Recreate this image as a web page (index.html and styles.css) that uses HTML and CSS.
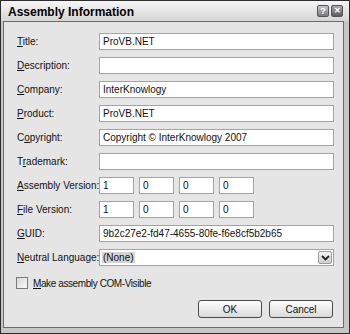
FILE: index.html
```html
<!DOCTYPE html>
<html lang="en">
<head>
    <meta charset="UTF-8">
    <title>Assembly Information</title>
    <link rel="stylesheet" href="styles.css">
</head>
<body>
    <div class="window">
        <div class="titlebar">
            <span class="caption">Assembly Information</span>
            <div class="caption-buttons">
                <span class="cap-btn">?</span>
                <span class="cap-btn close">&#x2715;</span>
            </div>
        </div>
        <div class="client">
            <div class="form">
                <label class="lbl"><u>T</u>itle:</label>
                <input class="field" value="ProVB.NET">

                <label class="lbl"><u>D</u>escription:</label>
                <input class="field" value="">

                <label class="lbl"><u>C</u>ompany:</label>
                <input class="field" value="InterKnowlogy">

                <label class="lbl"><u>P</u>roduct:</label>
                <input class="field" value="ProVB.NET">

                <label class="lbl">C<u>o</u>pyright:</label>
                <input class="field" value="Copyright © InterKnowlogy 2007">

                <label class="lbl">T<u>r</u>ademark:</label>
                <input class="field" value="">

                <label class="lbl"><u>A</u>ssembly Version:</label>
                <div class="versions">
                    <input class="field small" value="1">
                    <input class="field small" value="0">
                    <input class="field small" value="0">
                    <input class="field small" value="0">
                </div>

                <label class="lbl"><u>F</u>ile Version:</label>
                <div class="versions">
                    <input class="field small" value="1">
                    <input class="field small" value="0">
                    <input class="field small" value="0">
                    <input class="field small" value="0">
                </div>

                <label class="lbl"><u>G</u>UID:</label>
                <input class="field" value="9b2c27e2-fd47-4655-80fe-f6e8cf5b2b65">

                <label class="lbl"><u>N</u>eutral Language:</label>
                <div class="combo">
                    <span class="combo-text"><span class="selected">(None)</span></span>
                    <span class="combo-btn">
                        <svg width="9" height="6" viewBox="0 0 9 6"><path d="M1 1 L4.5 4.5 L8 1" fill="none" stroke="#222" stroke-width="1.8"/></svg>
                    </span>
                </div>
            </div>

            <label class="check"><span class="box"></span><span class="check-text"><u>M</u>ake assembly COM-Visible</span></label>

            <div class="buttons">
                <button class="btn">OK</button>
                <button class="btn">Cancel</button>
            </div>
        </div>
    </div>
</body>
</html>
```

FILE: styles.css
```css
html, body {
    margin: 0;
    padding: 0;
}
body {
    width: 350px;
    height: 334px;
    font-family: "Liberation Sans", Arial, sans-serif;
    font-size: 10px;
    color: #111;
    background: #fff;
}
.window {
    box-sizing: border-box;
    width: 350px;
    height: 334px;
    border: 1px solid #2c2c2c;
    background: #c6c6c6;
    display: flex;
    flex-direction: column;
}
.titlebar {
    height: 20px;
    flex: none;
    display: flex;
    align-items: center;
    justify-content: space-between;
    padding: 0 6px 0 7px;
    background: linear-gradient(#f6f6f6, #e2e2e2 60%, #d6d6d6);
}
.caption {
    font-weight: bold;
    font-size: 12px;
    color: #000;
    padding-top: 1px;
}
.caption-buttons {
    display: flex;
    gap: 2px;
}
.cap-btn {
    box-sizing: border-box;
    width: 12px;
    height: 12px;
    border: 1px solid #555;
    border-radius: 2px;
    background: linear-gradient(#c8c8c8, #7a7a7a);
    color: #fff;
    font-size: 9px;
    font-weight: bold;
    line-height: 10px;
    text-align: center;
}
.cap-btn.close {
    background: linear-gradient(#a8a8a8, #5c5c5c);
    font-size: 8px;
}
.client {
    flex: 1;
    margin: 0 5px 5px 2px;
    border: 1px solid #6c6c6c;
    background: #e5e5e5;
    padding: 11px 8px 0 13px;
    display: flex;
    flex-direction: column;
}
.form {
    display: grid;
    grid-template-columns: 82px 235px;
    grid-auto-rows: 17px;
    row-gap: 7px;
    align-items: center;
}
.lbl {
    white-space: nowrap;
}
.field {
    box-sizing: border-box;
    height: 17px;
    width: 235px;
    margin: 0;
    padding: 0 3px;
    border: 1px solid #a4a4a4;
    background: #fff;
    font-family: inherit;
    font-size: 10px;
    color: #111;
    outline: none;
}
.versions {
    display: flex;
    gap: 5px;
}
.field.small {
    width: 35px;
}
.combo {
    box-sizing: border-box;
    height: 17px;
    width: 235px;
    border: 1px solid #a4a4a4;
    background: #fff;
    display: flex;
    align-items: center;
    padding: 1px 1px 1px 2px;
}
.combo-text {
    flex: 1;
}
.selected {
    background: #d4d4d4;
    padding: 0 1px;
}
.combo-btn {
    box-sizing: border-box;
    width: 14px;
    height: 13px;
    border: 1px solid #9a9a9a;
    border-radius: 2px;
    background: linear-gradient(#f4f4f4, #cfcfcf);
    display: flex;
    align-items: center;
    justify-content: center;
}
.check {
    display: flex;
    align-items: center;
    gap: 5px;
    margin-top: 11px;
    margin-left: -1px;
    height: 12px;
}
.check-text {
    letter-spacing: -0.4px;
}
.box {
    box-sizing: border-box;
    width: 12px;
    height: 12px;
    border: 1px solid #7a7a7a;
    background: linear-gradient(135deg, #d8d8d8, #fafafa);
}
.buttons {
    display: flex;
    justify-content: flex-end;
    gap: 7px;
    margin-top: 11px;
    margin-right: 2px;
}
.btn {
    box-sizing: border-box;
    width: 64px;
    height: 18px;
    margin: 0;
    padding: 0;
    border: 1px solid #4a4a4a;
    border-radius: 3px;
    background: linear-gradient(#fdfdfd, #ececec 50%, #d9d9d9);
    font-family: inherit;
    font-size: 10px;
    color: #111;
}
```
